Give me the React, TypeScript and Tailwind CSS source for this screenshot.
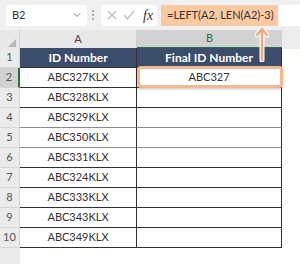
import { ChevronDown } from 'lucide-react';

const ids = ['ABC327KLX', 'ABC328KLX', 'ABC329KLX', 'ABC350KLX', 'ABC331KLX', 'ABC324KLX', 'ABC333KLX', 'ABC343KLX', 'ABC349KLX'];

export default function App() {
  return (
    <div className="relative w-[300px] h-[264px] overflow-hidden bg-white text-[#333]" style={{ fontFamily: 'Lato, "Open Sans", sans-serif' }}>
      {/* formula bar */}
      <div className="flex h-[30px] items-center bg-[#f0f0f0]">
        <div className="ml-[6px] flex h-[21px] w-[81px] items-center justify-between rounded-[3px] bg-white pl-[6px] pr-[4px] text-[11px]">
          <span>B2</span>
          <ChevronDown size={12} strokeWidth={1.5} className="text-[#555]" />
        </div>
        <div className="ml-[5px] flex h-[10px] w-[3px] flex-col justify-between">
          <span className="h-[2px] w-[2px] rounded-full bg-[#999]" />
          <span className="h-[2px] w-[2px] rounded-full bg-[#999]" />
          <span className="h-[2px] w-[2px] rounded-full bg-[#999]" />
        </div>
        <div className="ml-[6px] flex h-[21px] w-[56px] items-center gap-[6px] rounded-[3px] bg-white pl-[6px]">
          <svg width="10" height="10" viewBox="0 0 10 10" className="text-[#bbb]">
            <path d="M1 1L9 9M9 1L1 9" stroke="currentColor" strokeWidth="1.2" />
          </svg>
          <svg width="12" height="10" viewBox="0 0 12 10" className="text-[#bbb]">
            <path d="M1 5L4.5 9L11 1" stroke="currentColor" strokeWidth="1.2" fill="none" />
          </svg>
          <span className="ml-[2px] text-[14px] italic text-[#333]" style={{ fontFamily: '"Liberation Serif", serif' }}>fx</span>
        </div>
        <div className="ml-[4px] flex h-[21px] flex-1 bg-white">
          <div className="flex w-[117px] items-center whitespace-nowrap bg-[#fbc9a2] pl-[6px] text-[11px] text-[#333]">=LEFT(A2, LEN(A2)-3)</div>
        </div>
      </div>

      {/* column headers */}
      <div className="grid h-[18px] grid-cols-[20px_117px_145px_18px] bg-[#e8e8e8] text-[11px]">
        <div className="flex items-end justify-end border-r border-[#d0d0d0] pb-[2px] pr-[3px]">
          <svg width="8" height="8" viewBox="0 0 8 8"><path d="M8 0V8H0Z" fill="#b8b8b8" /></svg>
        </div>
        <div className="flex items-center justify-center border-r border-[#d0d0d0] text-[#444]">A</div>
        <div className="flex items-center justify-center border-b-2 border-[#217346] bg-[#d2d2d2] text-[#217346]">B</div>
        <div className="bg-[#ececec]" />
      </div>

      {/* sheet rows */}
      <div className="grid grid-cols-[20px_117px_145px_18px]">
        <div className="flex h-[20px] items-center justify-center border-b border-r border-[#d6d6d6] bg-[#ebebeb] text-[11px] text-[#555]">1</div>
        <div className="flex items-center justify-center border-r border-b border-[#2f2f2f] bg-[#3b4d6b] text-[12px] font-bold text-white">ID Number</div>
        <div className="flex items-center justify-center border-r border-b border-[#2f2f2f] bg-[#3b4d6b] text-[12px] font-bold text-white">Final ID Number</div>
        <div />
        {ids.map((id, i) => (
          <div key={id} className="contents">
            <div className={`flex h-[20px] items-center justify-center border-b border-[#d6d6d6] text-[11px] text-[#555] ${i === 0 ? 'border-r-2 border-r-[#217346] bg-[#d2d2d2]' : 'border-r border-r-[#d6d6d6] bg-[#ebebeb]'}`}>{i + 2}</div>
            <div className={`flex items-center justify-center border-r border-b border-[#2f2f2f] text-[11px] ${i === 2 || i === 3 ? 'border-b-[#8a8a8a]' : ''}`}>{id}</div>
            <div className={`flex items-center justify-center border-r border-b border-[#2f2f2f] text-[11px] ${i === 2 || i === 3 ? 'border-b-[#8a8a8a]' : ''}`}>{i === 0 ? 'ABC327' : ''}</div>
            <div />
          </div>
        ))}
        <div className="h-[20px] bg-[#ebebeb]" />
      </div>

      {/* highlight on B2 */}
      <div className="absolute left-[137px] top-[66px] h-[22px] w-[146px] rounded-[4px] border-[3px] border-[#f4b990] shadow-[0_1px_3px_rgba(0,0,0,0.25)]" />
      {/* arrow */}
      <svg className="absolute left-[255px] top-[26px]" width="14" height="36" viewBox="0 0 14 36">
        <path d="M7 3V34M2 9L7 3L12 9" stroke="white" strokeWidth="5" fill="none" strokeLinecap="round" />
        <path d="M7 3V34M2 9L7 3L12 9" stroke="#f4a77a" strokeWidth="2.5" fill="none" strokeLinecap="round" />
      </svg>
    </div>
  );
}
